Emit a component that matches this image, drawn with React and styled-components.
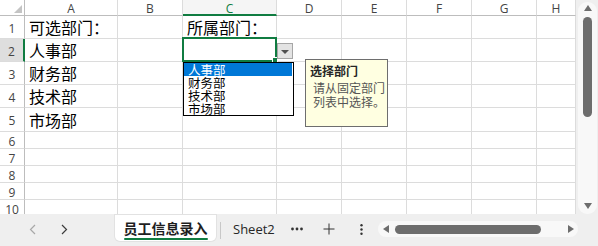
import React from "react";
import styled, { createGlobalStyle } from "styled-components";

const GlobalStyle = createGlobalStyle`
  html, body {
    margin: 0;
    padding: 0;
    background: #ffffff;
  }
  body {
    width: 598px;
    height: 246px;
    overflow: hidden;
    font-family: "Noto Sans", "Noto Sans CJK SC", sans-serif;
  }
`;

const GREEN = "#107c41";
const GRID = "#dcdcdc";
const HEAD_LINE = "#bdbdbd";

const columns = [
  { key: "A", width: 93 },
  { key: "B", width: 65 },
  { key: "C", width: 94, active: true },
  { key: "D", width: 65 },
  { key: "E", width: 65 },
  { key: "F", width: 65 },
  { key: "G", width: 65 },
  { key: "H", width: 39 },
];

const rows = [
  { n: 1, h: 23, cells: { A: "可选部门：", C: "所属部门：" } },
  { n: 2, h: 23, cells: { A: "人事部" }, active: true },
  { n: 3, h: 23, cells: { A: "财务部" } },
  { n: 4, h: 23, cells: { A: "技术部" } },
  { n: 5, h: 24, cells: { A: "市场部" } },
  { n: 6, h: 17, cells: {} },
  { n: 7, h: 17, cells: {} },
  { n: 8, h: 17, cells: {} },
  { n: 9, h: 17, cells: {} },
  { n: 10, h: 17, cells: {} },
];

const options = ["人事部", "财务部", "技术部", "市场部"];

const Window = styled.div`
  width: 598px;
  height: 246px;
  display: flex;
  flex-direction: column;
  background: #efefef;
`;

const Body = styled.div`
  height: 214px;
  display: flex;
  overflow: hidden;
`;

const Sheet = styled.div`
  width: 576px;
  height: 214px;
  overflow: hidden;
  background: #ffffff;
`;

const Grid = styled.div`
  display: grid;
  grid-template-columns: 25px ${columns.map((c) => c.width + "px").join(" ")};
  grid-template-rows: 16px ${rows.map((r) => r.h + "px").join(" ")};
`;

const Corner = styled.div`
  box-sizing: border-box;
  border-right: 1px solid ${HEAD_LINE};
  border-bottom: 1px solid ${HEAD_LINE};
  display: flex;
  align-items: flex-end;
  justify-content: flex-end;
  padding: 0 2px 2px 0;
  background: #ffffff;
`;

const SelectAll = styled.div`
  width: 0;
  height: 0;
  border-left: 8px solid transparent;
  border-bottom: 8px solid #c4c4c4;
`;

const ColHead = styled.div`
  box-sizing: border-box;
  border-right: 1px solid ${GRID};
  border-bottom: ${(p) => (p.$active ? `2px solid ${GREEN}` : `1px solid ${HEAD_LINE}`)};
  background: ${(p) => (p.$active ? "#f5f5f5" : "#ffffff")};
  color: ${(p) => (p.$active ? GREEN : "#444444")};
  font-family: "Open Sans", "Noto Sans", sans-serif;
  font-size: 12px;
  line-height: 15px;
  padding-top: 1px;
  text-align: center;
`;

const RowHead = styled.div`
  box-sizing: border-box;
  border-right: ${(p) => (p.$active ? `2px solid ${GREEN}` : `1px solid ${HEAD_LINE}`)};
  border-bottom: 1px solid ${GRID};
  background: ${(p) => (p.$active ? "#dedede" : "#ffffff")};
  color: #444444;
  font-family: "Open Sans", "Noto Sans", sans-serif;
  font-size: 12px;
  display: flex;
  align-items: center;
  justify-content: center;
  padding-top: 2px;
`;

const Cell = styled.div`
  box-sizing: border-box;
  position: relative;
  border-right: 1px solid ${GRID};
  border-bottom: 1px solid ${GRID};
  padding-left: 4px;
  font-family: "Noto Sans CJK SC", "Noto Sans", sans-serif;
  font-size: 16px;
  color: #000000;
  display: flex;
  align-items: center;
  white-space: nowrap;
`;

const ActiveFrame = styled.div`
  position: absolute;
  left: -1px;
  top: -2px;
  right: -1px;
  bottom: -1px;
  border: 2px solid ${GREEN};
  z-index: 2;
`;

const FillHandle = styled.div`
  position: absolute;
  right: -3px;
  bottom: -3px;
  width: 4px;
  height: 4px;
  background: ${GREEN};
  border: 1px solid #ffffff;
`;

const DropButton = styled.div`
  position: absolute;
  left: 94px;
  top: 4px;
  width: 16px;
  height: 16px;
  box-sizing: border-box;
  border: 1px solid #a6a6a6;
  background: #e3e3e3;
  display: flex;
  align-items: center;
  justify-content: center;
  z-index: 3;
`;

const Caret = styled.div`
  width: 0;
  height: 0;
  border-left: 4px solid transparent;
  border-right: 4px solid transparent;
  border-top: 4px solid #505050;
  margin-top: 1px;
`;

const DropList = styled.div`
  position: absolute;
  left: 0;
  top: 23px;
  width: 111px;
  height: 54px;
  box-sizing: border-box;
  border: 1px solid #000000;
  background: #ffffff;
  z-index: 4;
  display: flex;
  flex-direction: column;
`;

const Option = styled.div`
  height: 13px;
  line-height: 13px;
  padding-left: 4px;
  font-family: "Noto Sans CJK SC", "Noto Sans", sans-serif;
  font-size: 12.5px;
  color: ${(p) => (p.$selected ? "#ffffff" : "#000000")};
  background: ${(p) => (p.$selected ? "#0078d7" : "transparent")};
  margin-right: 1px;
`;

const Tooltip = styled.div`
  position: absolute;
  left: 122px;
  top: 20px;
  width: 83px;
  height: 68px;
  box-sizing: border-box;
  border: 1px solid #6e6e6e;
  background: #ffffe1;
  padding: 3px 0 0 4px;
  z-index: 4;
  font-family: "Noto Sans CJK SC", "Noto Sans", sans-serif;
  white-space: nowrap;
`;

const TipTitle = styled.div`
  font-size: 12px;
  font-weight: bold;
  line-height: 16px;
  color: #262626;
`;

const TipText = styled.div`
  font-size: 12px;
  line-height: 14px;
  color: #555555;
  padding: 2px 0 0 3px;
`;

const VScroll = styled.div`
  width: 22px;
  height: 214px;
  background: #efefef;
  padding: 2px 1px 0 2px;
  box-sizing: border-box;
`;

const VTrack = styled.div`
  height: 100%;
  background: #f8f8f8;
  border-radius: 9px;
  display: flex;
  flex-direction: column;
  align-items: center;
  padding-top: 3px;
  box-sizing: border-box;
`;

const VThumb = styled.div`
  width: 9px;
  height: 100px;
  border-radius: 5px;
  background: #6d6d6d;
  margin-top: 6px;
`;

const Spacer = styled.div`
  flex: 1;
`;

const Arrow = styled.div`
  width: 0;
  height: 0;
  ${(p) =>
    p.$dir === "up"
      ? `border-left: 4px solid transparent; border-right: 4px solid transparent; border-bottom: 6px solid #6d6d6d;`
      : p.$dir === "down"
      ? `border-left: 4px solid transparent; border-right: 4px solid transparent; border-top: 6px solid #6d6d6d; margin-bottom: 5px;`
      : p.$dir === "left"
      ? `border-top: 4px solid transparent; border-bottom: 4px solid transparent; border-right: 6px solid #6d6d6d;`
      : `border-top: 4px solid transparent; border-bottom: 4px solid transparent; border-left: 6px solid #6d6d6d;`}
`;

const TabBar = styled.div`
  height: 32px;
  display: flex;
  align-items: flex-start;
  background: #efefef;
  padding-left: 16px;
`;

const NavButton = styled.div`
  width: 32px;
  height: 30px;
  display: flex;
  align-items: center;
  justify-content: center;
  color: ${(p) => (p.$disabled ? "#a8a8a8" : "#3c3c3c")};
`;

const Tab = styled.div`
  width: 101px;
  height: 26px;
  margin: 1px 0 0 35px;
  background: #ffffff;
  border-radius: 0 0 5px 5px;
  box-shadow: 0 0 0 1px #e2e2e2;
  display: flex;
  flex-direction: column;
  align-items: center;
  padding-top: 5px;
  box-sizing: border-box;
`;

const TabLabel = styled.div`
  font-family: "Noto Sans CJK SC", "Noto Sans", sans-serif;
  font-size: 14px;
  font-weight: bold;
  line-height: 17px;
  color: #1f1f1f;
  white-space: nowrap;
`;

const TabUnderline = styled.div`
  width: 84px;
  height: 2px;
  border-radius: 1px;
  background: ${GREEN};
  margin-top: 1px;
`;

const TabDivider = styled.div`
  width: 1px;
  height: 17px;
  margin: 8px 0 0 4px;
  background: #c8c8c8;
`;

const SheetName = styled.div`
  width: 64px;
  height: 30px;
  padding-left: 12px;
  box-sizing: border-box;
  display: flex;
  align-items: center;
  font-family: "Open Sans", "Noto Sans", sans-serif;
  font-size: 13px;
  color: #262626;
`;

const IconButton = styled.div`
  width: 24px;
  height: 30px;
  display: flex;
  align-items: center;
  justify-content: center;
  margin-left: ${(p) => p.$gap || 0}px;
  color: #333333;
`;

const HTrack = styled.div`
  width: 200px;
  height: 16px;
  margin: 7px 0 0 5px;
  background: #f8f8f8;
  border-radius: 8px;
  display: flex;
  align-items: center;
  padding: 0 4px 0 5px;
  box-sizing: border-box;
`;

const HThumb = styled.div`
  width: 146px;
  height: 9px;
  border-radius: 5px;
  background: #6d6d6d;
  margin-left: 6px;
`;

const Chevron = ({ left }) => (
  <svg width="7" height="11" viewBox="0 0 7 11" fill="none">
    <path
      d={left ? "M6 1 L1.5 5.5 L6 10" : "M1 1 L5.5 5.5 L1 10"}
      stroke="currentColor"
      strokeWidth="1.2"
    />
  </svg>
);

const App = () => {
  return (
    <Window>
      <GlobalStyle />
      <Body>
        <Sheet>
          <Grid>
            <Corner>
              <SelectAll />
            </Corner>
            {columns.map((c) => (
              <ColHead key={c.key} $active={c.active}>
                {c.key}
              </ColHead>
            ))}
            {rows.map((r) => (
              <React.Fragment key={r.n}>
                <RowHead $active={r.active}>{r.n}</RowHead>
                {columns.map((c) => {
                  const isActive = r.active && c.active;
                  return (
                    <Cell key={c.key}>
                      {r.cells[c.key]}
                      {isActive && (
                        <>
                          <ActiveFrame>
                            <FillHandle />
                          </ActiveFrame>
                          <DropButton>
                            <Caret />
                          </DropButton>
                          <DropList>
                            {options.map((o, i) => (
                              <Option key={o} $selected={i === 0}>
                                {o}
                              </Option>
                            ))}
                          </DropList>
                          <Tooltip>
                            <TipTitle>选择部门</TipTitle>
                            <TipText>
                              请从固定部门
                              <br />
                              列表中选择。
                            </TipText>
                          </Tooltip>
                        </>
                      )}
                    </Cell>
                  );
                })}
              </React.Fragment>
            ))}
          </Grid>
        </Sheet>
        <VScroll>
          <VTrack>
            <Arrow $dir="up" />
            <VThumb />
            <Spacer />
            <Arrow $dir="down" />
          </VTrack>
        </VScroll>
      </Body>
      <TabBar>
        <NavButton $disabled>
          <Chevron left />
        </NavButton>
        <NavButton>
          <Chevron />
        </NavButton>
        <Tab>
          <TabLabel>员工信息录入</TabLabel>
          <TabUnderline />
        </Tab>
        <TabDivider />
        <SheetName>Sheet2</SheetName>
        <IconButton>
          <svg width="12" height="4" viewBox="0 0 12 4">
            <circle cx="1.5" cy="2" r="1.4" fill="#333" />
            <circle cx="6" cy="2" r="1.4" fill="#333" />
            <circle cx="10.5" cy="2" r="1.4" fill="#333" />
          </svg>
        </IconButton>
        <IconButton $gap={8}>
          <svg width="12" height="12" viewBox="0 0 12 12">
            <path d="M6 0.5 V11.5 M0.5 6 H11.5" stroke="#333" strokeWidth="1" />
          </svg>
        </IconButton>
        <IconButton $gap={8}>
          <svg width="3" height="11" viewBox="0 0 3 11">
            <circle cx="1.5" cy="1.3" r="1.2" fill="#333" />
            <circle cx="1.5" cy="5.5" r="1.2" fill="#333" />
            <circle cx="1.5" cy="9.7" r="1.2" fill="#333" />
          </svg>
        </IconButton>
        <HTrack>
          <Arrow $dir="left" />
          <HThumb />
          <Spacer />
          <Arrow $dir="right" />
        </HTrack>
      </TabBar>
    </Window>
  );
};

export default App;
